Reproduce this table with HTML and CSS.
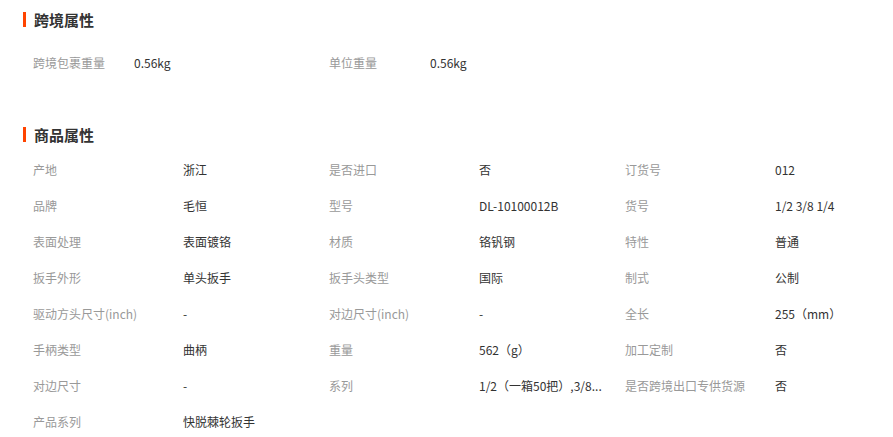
FILE: index.html
```html
<!DOCTYPE html>
<html lang="zh-CN">
<head>
    <meta charset="UTF-8">
    <title>商品属性</title>
    <link rel="stylesheet" href="styles.css">
</head>
<body>

<div class="seccion">
    <h3 class="titulo">跨境属性</h3>
    <ul class="lista lista-corta">
        <li><span class="etiqueta">跨境包裹重量</span><span class="valor">0.56kg</span></li>
        <li><span class="etiqueta">单位重量</span><span class="valor">0.56kg</span></li>
    </ul>
</div>

<div class="seccion seccion-2">
    <h3 class="titulo">商品属性</h3>
    <ul class="lista">
        <li><span class="etiqueta">产地</span><span class="valor">浙江</span></li>
        <li><span class="etiqueta">是否进口</span><span class="valor">否</span></li>
        <li><span class="etiqueta">订货号</span><span class="valor">012</span></li>
        <li><span class="etiqueta">品牌</span><span class="valor">毛恒</span></li>
        <li><span class="etiqueta">型号</span><span class="valor">DL-10100012B</span></li>
        <li><span class="etiqueta">货号</span><span class="valor">1/2 3/8 1/4</span></li>
        <li><span class="etiqueta">表面处理</span><span class="valor">表面镀铬</span></li>
        <li><span class="etiqueta">材质</span><span class="valor">铬钒钢</span></li>
        <li><span class="etiqueta">特性</span><span class="valor">普通</span></li>
        <li><span class="etiqueta">扳手外形</span><span class="valor">单头扳手</span></li>
        <li><span class="etiqueta">扳手头类型</span><span class="valor">国际</span></li>
        <li><span class="etiqueta">制式</span><span class="valor">公制</span></li>
        <li><span class="etiqueta">驱动方头尺寸(inch)</span><span class="valor">-</span></li>
        <li><span class="etiqueta">对边尺寸(inch)</span><span class="valor">-</span></li>
        <li><span class="etiqueta">全长</span><span class="valor">255（mm）</span></li>
        <li><span class="etiqueta">手柄类型</span><span class="valor">曲柄</span></li>
        <li><span class="etiqueta">重量</span><span class="valor">562（g）</span></li>
        <li><span class="etiqueta">加工定制</span><span class="valor">否</span></li>
        <li><span class="etiqueta">对边尺寸</span><span class="valor">-</span></li>
        <li><span class="etiqueta">系列</span><span class="valor" title="1/2（一箱50把）,3/8（一箱50把）,1/4（一箱50把）">1/2（一箱50把）,3/8...</span></li>
        <li><span class="etiqueta">是否跨境出口专供货源</span><span class="valor">否</span></li>
        <li><span class="etiqueta">产品系列</span><span class="valor">快脱棘轮扳手</span></li>
    </ul>
</div>

</body>
</html>
```

FILE: styles.css
```css
body {
    margin: 0;
    padding: 0 0 0 23px;
    font-family: "Noto Sans CJK SC", "Liberation Sans", sans-serif;
    font-size: 12px;
    color: #333;
    background: #fff;
    overflow: hidden;
}
.seccion {
    padding-top: 12px;
}
.seccion-2 {
    padding-top: 37px;
}
.titulo {
    margin: 0;
    height: 15px;
    line-height: 15px;
    padding-left: 8px;
    border-left: 3px solid #ff4400;
    font-size: 15px;
    font-weight: bold;
    color: #333;
}
.lista {
    list-style: none;
    margin: 0;
    padding: 19px 0 0 10px;
    display: grid;
    grid-template-columns: repeat(3, 296px);
    width: 888px;
}
.lista li {
    display: flex;
    height: 36px;
    line-height: 18px;
    white-space: nowrap;
}
.lista-corta {
    padding-top: 27px;
}
.etiqueta {
    width: 150px;
    color: #999;
}
.lista-corta .etiqueta {
    width: 101px;
}
.valor {
    width: 140px;
    color: #333;
}
```
